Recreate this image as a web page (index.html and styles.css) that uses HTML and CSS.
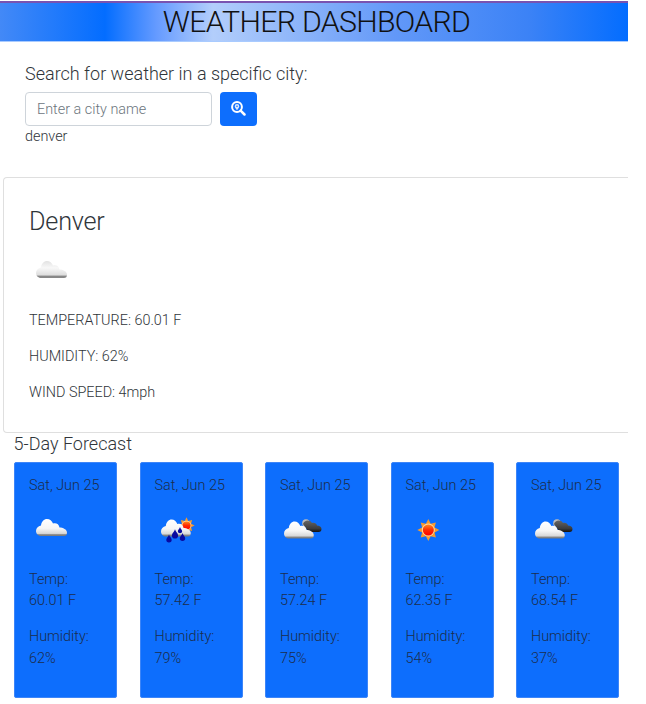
FILE: index.html
```
<!DOCTYPE html>
<html lang="en">
<head>
<meta charset="utf-8">
<title>Weather Dashboard</title>
<link rel="stylesheet" href="styles.css">
</head>
<body>
<svg class="defs" width="0" height="0" aria-hidden="true">
  <defs>
    <linearGradient id="white" x1="0" y1="0" x2="0" y2="1">
      <stop offset="0" stop-color="#fff"/><stop offset=".55" stop-color="#f6f6f6"/><stop offset=".85" stop-color="#d8d8d8"/><stop offset=".92" stop-color="#888"/><stop offset="1" stop-color="#777"/>
    </linearGradient>
    <linearGradient id="pale" x1="0" y1="0" x2="0" y2="1">
      <stop offset="0" stop-color="#e2e2e2"/><stop offset=".4" stop-color="#f8f8f8"/><stop offset=".82" stop-color="#dedede"/><stop offset=".9" stop-color="#888"/><stop offset="1" stop-color="#888"/>
    </linearGradient>
    <linearGradient id="dark" x1="0" y1="0" x2="0" y2="1">
      <stop offset="0" stop-color="#666"/><stop offset=".7" stop-color="#3c3c3c"/><stop offset="1" stop-color="#111"/>
    </linearGradient>
    <linearGradient id="red" x1="0" y1="0" x2="0" y2="1">
      <stop offset="0" stop-color="#ff8a20"/><stop offset=".5" stop-color="#ff2a00"/><stop offset="1" stop-color="#f00"/>
    </linearGradient>
    <path id="cloud" d="M5 17C2 17 0 14.500 0 12C0 9.200 2 7 5 6.500C5.500 2.500 8 0 11 0C13.800 0 16 1.800 17 4.500C20 3.500 23 5 23.500 8.500C26 8 28.500 9.500 28.500 10C30 10.500 31 12 31 13.500C31 16 30 17 28 17Z"/>
    <path id="drop" d="M0-4.500C.5-2.500 2.700-1 2.700.8A2.700 2.700 0 0 1-2.700.8C-2.700-1-.5-2.500 0-4.500Z"/>
    <g id="sun">
      <path fill="#f89a2c" d="M0-11L2.400-6.200L7.600-7.600L6.200-2.400L11 0L6.200 2.400L7.600 7.600L2.400 6.200L0 11L-2.400 6.200L-7.600 7.600L-6.200 2.400L-11 0L-6.200-2.400L-7.600-7.600L-2.400-6.200Z"/>
      <circle r="6.500" fill="#ffd9a0"/><circle r="5.500" fill="url(#red)"/>
    </g>
    <g id="broken">
      <circle cx="22.500" cy="18" r="3.800" fill="#bbb"/>
      <path fill="url(#dark)" d="M19.500 19C20.500 15 26.500 14 28.500 18C31 17.500 33 18.500 33.500 20.500C36 20.500 38 22 38 24C38 26 37 27 35 27H25Z"/>
      <use href="#cloud" fill="url(#white)" transform="translate(.5 16.500) scale(.96 1)"/>
    </g>
  </defs>
</svg>
<div class="page">
  <header class="title">WEATHER DASHBOARD</header>
  <section class="search">
    <h5>Search for weather in a specific city:</h5>
    <div class="form">
      <input type="text" placeholder="Enter a city name" aria-label="City">
      <button type="button" aria-label="Search">
        <svg width="15" height="15" viewBox="0 0 15 15" fill="none"><circle cx="6" cy="6" r="4.900" stroke="#fff" stroke-width="2"/><path d="M9.600 9.600L13.500 13.500" stroke="#fff" stroke-width="2.500" stroke-linecap="round"/><path fill="#fff" fill-opacity=".85" d="M6 9.300C5 7.700 3.700 6.700 3.700 5.200A2.300 2.300 0 0 1 8.300 5.200C8.300 6.700 7 7.700 6 9.300Z"/><circle cx="6" cy="5.200" r=".8" fill="#0d6efd"/></svg>
      </button>
    </div>
    <div>denver</div>
  </section>
  <section class="current">
    <h3>Denver</h3>
    <svg class="icon" viewBox="0 0 45 45"><use href="#cloud" x="7" y="12" fill="url(#pale)"/></svg>
    <p>TEMPERATURE: 60.01 F</p>
    <p>HUMIDITY: 62%</p>
    <p>WIND SPEED: 4mph</p>
  </section>
  <h5 class="forecast-title">5-Day Forecast</h5>
  <section class="forecast">
    <article class="day">
      <p>Sat, Jun 25</p>
      <svg class="icon" viewBox="0 0 45 45"><use href="#cloud" x="7" y="13" fill="url(#white)"/></svg>
      <p>Temp: <br>60.01 F</p><p>Humidity: <br>62%</p>
    </article>
    <article class="day">
      <p>Sat, Jun 25</p>
      <svg class="icon" viewBox="0 0 45 45">
        <use href="#sun" transform="translate(31.500 19.500) scale(.74)"/>
        <use href="#cloud" fill="url(#white)" transform="translate(6 13.500) scale(.96 1)"/>
        <g fill="#0909a0"><use href="#drop" x="14" y="33"/><use href="#drop" transform="translate(20 28.500) scale(1.150)"/><use href="#drop" x="27.500" y="31.500"/><use href="#drop" transform="translate(25 24.500) scale(.8)"/></g>
      </svg>
      <p>Temp: <br>57.42 F</p><p>Humidity: <br>79%</p>
    </article>
    <article class="day">
      <p>Sat, Jun 25</p>
      <svg class="icon" viewBox="0 0 45 45"><use href="#broken" x="3.500" y="-1"/></svg>
      <p>Temp: <br>57.24 F</p><p>Humidity: <br>75%</p>
    </article>
    <article class="day">
      <p>Sat, Jun 25</p>
      <svg class="icon" viewBox="0 0 45 45"><use href="#sun" x="22.300" y="24"/></svg>
      <p>Temp: <br>62.35 F</p><p>Humidity: <br>54%</p>
    </article>
    <article class="day">
      <p>Sat, Jun 25</p>
      <svg class="icon" viewBox="0 0 45 45"><use href="#broken" x="3.500" y="-1"/></svg>
      <p>Temp: <br>68.54 F</p><p>Humidity: <br>37%</p>
    </article>
  </section>
</div>
</body>
</html>
```

FILE: styles.css
```
* { box-sizing: border-box; }
body {
  margin: 0;
  background: #fff;
  color: #30353a;
  font: 300 14.4px/21.6px Roboto, sans-serif;
}
.defs { position: absolute; }
.page { width: 628px; padding-top: 1px; overflow: hidden; }
h3, h5, p { margin: 0; font-weight: 300; }
h5 { font-size: 18px; line-height: 21.6px; }
.title {
  height: 41px;
  border-top: 2px solid #7953b0;
  border-bottom: 1px solid #a9cbff;
  background: linear-gradient(90deg, #4389f7 0, #036dff 105px, #669bff 157px, #b3cefb 213px, #6298f8 395px, #3b82f6 530px, #036dff 628px);
  color: #111;
  font-size: 30.3px;
  letter-spacing: -.72px;
  line-height: 38px;
  text-align: center;
  padding-left: 5px;
}
.search { height: 135px; padding: 21px 25px 0; }
.form { display: flex; gap: 8px; margin-top: 7px; }
.form input {
  width: 187px;
  height: 34px;
  padding: 1px 11px 0;
  border: 1px solid #ced4da;
  border-radius: 4px;
  font: inherit;
  background: #fff;
}
.form input::placeholder { color: #6c757d; opacity: 1; }
.form button {
  display: flex;
  align-items: center;
  justify-content: center;
  width: 37px;
  height: 34px;
  padding: 0 0 1px;
  border: 0;
  border-radius: 4px;
  background: #0d6efd;
}
.form + div { line-height: 22px; }
.current {
  height: 256px;
  margin-left: 3px;
  padding: 29px 25px 0;
  border: 1px solid #dfdfdf;
  border-right: 0;
  border-radius: 4px 0 0 4px;
}
.current h3 { font-size: 25.2px; letter-spacing: -.2px; line-height: 30px; }
.icon { display: block; width: 45px; height: 45px; }
.current .icon { margin: 12px 0 16px; }
.current p { margin-bottom: 14.4px; }
.forecast-title { padding-left: 13.5px; line-height: 22px; }
.forecast {
  display: grid;
  grid-template-columns: repeat(5, 103px);
  column-gap: 22.5px;
  margin: 7px 0 0 14px;
}
.day {
  height: 236px;
  padding: 12px 0 0 14px;
  border: 1px solid #3d85f8;
  border-radius: 2px;
  background: #0d6efd;
  color: #1c2d4c;
}
.day .icon { margin: 9px 0 18px; }
.day p + p { margin-top: 14.4px; }
```
